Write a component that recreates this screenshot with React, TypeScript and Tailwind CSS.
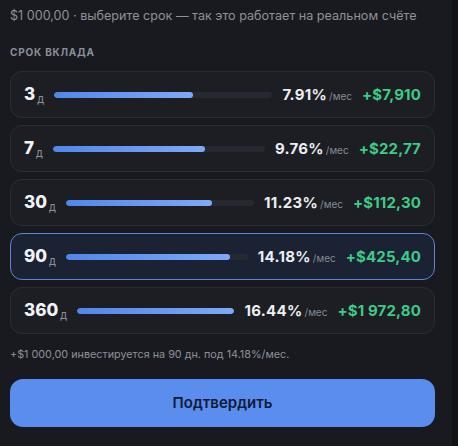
import React from "react";

const rows = [
  { d: "3", rate: "7.91%", amt: "+$7,910", fill: 63.6, sel: false },
  { d: "7", rate: "9.76%", amt: "+$22,77", fill: 71.6, sel: false },
  { d: "30", rate: "11.23%", amt: "+$112,30", fill: 77.8, sel: false },
  { d: "90", rate: "14.18%", amt: "+$425,40", fill: 90.1, sel: true },
  { d: "360", rate: "16.44%", amt: "+$1 972,80", fill: 100, sel: false },
];

export default function App() {
  return (
    <div
      className="flex w-[458px] h-[446px] bg-[#121317] overflow-hidden"
      style={{ fontFamily: "Inter, 'Noto Sans', sans-serif" }}
    >
      <div className="w-[452px] h-full bg-[#181a1f] pl-[10px] pr-[17px] pt-[7px]">
        <div className="text-[12.6px] leading-[18px] text-[#8d919a] whitespace-nowrap">
          $1 000,00 · выберите срок — так это работает на реальном счёте
        </div>
        <div className="mt-[20px] text-[10px] leading-[14px] font-bold tracking-[0.08em] text-[#8a8f99] uppercase">
          Срок вклада
        </div>
        <div className="mt-[12px] flex flex-col gap-[7px]">
          {rows.map((r) => (
            <div
              key={r.d}
              className={
                "h-[47px] rounded-[12px] border flex items-center pl-[13px] pr-[13px] gap-[10px] " +
                (r.sel
                  ? "bg-[#1b2233] border-[#5b85d6]"
                  : "bg-[#1c1e24] border-[#2a2d34]")
              }
            >
              <div className="flex items-baseline gap-[2px] shrink-0">
                <span className="text-[17px] font-extrabold text-[#f2f3f5] leading-none">{r.d}</span>
                <span className="text-[11px] text-[#8d919a] leading-none relative top-[3px]">д</span>
              </div>
              <div className="flex-1 h-[6px] rounded-full bg-[#262931] overflow-hidden">
                <div
                  className="h-full rounded-full bg-gradient-to-r from-[#5186ea] to-[#80a8f5]"
                  style={{ width: `${r.fill}%` }}
                />
              </div>
              <div className="flex items-baseline gap-[2px] shrink-0">
                <span className="text-[15px] font-bold tracking-[0.02em] text-[#eceef1] leading-none">{r.rate}</span>
                <span className="text-[10px] text-[#858a94] leading-none">/мес</span>
              </div>
              <span className="shrink-0 text-[15px] font-bold tracking-[0.01em] text-[#3ecb86] leading-none">{r.amt}</span>
            </div>
          ))}
        </div>
        <div className="mt-[14px] text-[10.8px] leading-[14px] text-[#8d919a] whitespace-nowrap">
          +$1 000,00 инвестируется на 90 дн. под 14.18%/мес.
        </div>
        <button className="mt-[17px] w-full h-[48px] rounded-[13px] bg-[#5a8dee] text-[#0e1b38] text-[15px] font-semibold">
          Подтвердить
        </button>
      </div>
    </div>
  );
}
